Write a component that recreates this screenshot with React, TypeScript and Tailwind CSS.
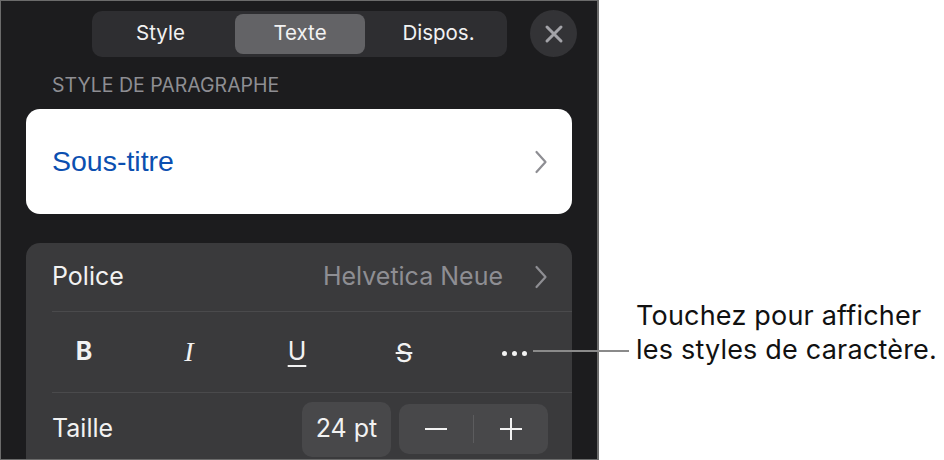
import React from "react";

const Chevron = ({ color }: { color: string }) => (
  <svg width="14" height="26" viewBox="0 0 14 26" fill="none">
    <path d="M2.5 3 L11.5 13 L2.5 23" stroke={color} strokeWidth="2.2" strokeLinecap="round" strokeLinejoin="round" />
  </svg>
);

export default function App() {
  return (
    <div className="relative w-[944px] h-[460px] bg-white overflow-hidden" style={{ fontFamily: "Inter, Roboto, sans-serif" }}>
      <div className="w-[599px] h-[460px] bg-[#1c1c1e] border border-[#6b6b6b] border-r-2 flex flex-col overflow-hidden">
        {/* top bar */}
        <div className="shrink-0 flex items-center pt-[9px] pl-[91px]">
          <div className="w-[415px] h-[46px] rounded-[10px] bg-[#2e2e31] flex items-center px-[3px]">
            <div className="flex-1 text-center pr-[9px] text-[20.5px] text-[#f2f2f2]">Style</div>
            <div className="w-[130px] h-[40px] rounded-[8px] bg-[#636366] flex items-center justify-center text-[20.5px] text-[#f2f2f2]">Texte</div>
            <div className="flex-1 text-center pl-[8px] text-[20.5px] text-[#f2f2f2]">Dispos.</div>
          </div>
          <div className="ml-[23px] w-[47px] h-[47px] rounded-full bg-[#333336] flex items-center justify-center">
            <svg width="20" height="20" viewBox="0 0 20 20">
              <path d="M3 3 L17 17 M17 3 L3 17" stroke="#a3a3a8" strokeWidth="3" strokeLinecap="round" />
            </svg>
          </div>
        </div>
        <div className="shrink-0 pl-[51px] mt-[18px] text-[19.5px] leading-[20px] text-[#8e8e93]">STYLE DE PARAGRAPHE</div>
        <div className="shrink-0 ml-[25px] mt-[14px] w-[546px] h-[105px] rounded-[14px] bg-white flex items-center justify-between pl-[26px] pr-[24px]">
          <span className="text-[28.5px] text-[#0b4fb0]" style={{ fontFamily: "'Liberation Sans', Arial, sans-serif" }}>Sous-titre</span>
          <Chevron color="#8e8e93" />
        </div>
        <div className="shrink-0 ml-[25px] mt-[29px] w-[546px] h-[230px] rounded-t-[14px] bg-[#3a3a3c] pl-[26px]">
          <div className="h-[69px] flex items-center justify-between pr-[24px] border-b border-[#4a4a4c]">
            <span className="text-[25px] text-[#f2f2f2]">Police</span>
            <div className="flex items-center gap-[31px]">
              <span className="text-[25px] text-[#8e8e93]">Helvetica Neue</span>
              <Chevron color="#8e8e93" />
            </div>
          </div>
          <div className="h-[81px] flex items-center border-b border-[#4a4a4c] text-[#f2f2f2]">
            <div className="w-[64px] text-center text-[25px] font-bold">B</div>
            <div className="ml-[41px] w-[64px] text-center text-[28px] italic" style={{ fontFamily: "'Liberation Serif', serif" }}>I</div>
            <div className="ml-[44px] w-[64px] text-center text-[25px] underline underline-offset-[5px] decoration-[2px]">U</div>
            <div className="ml-[43px] w-[64px] text-center text-[26px] line-through">S</div>
            <div className="ml-[46px] w-[64px] flex items-center justify-center gap-[5px] pt-[2px]">
              <span className="w-[5px] h-[5px] rounded-full bg-[#f2f2f2]" />
              <span className="w-[5px] h-[5px] rounded-full bg-[#f2f2f2]" />
              <span className="w-[5px] h-[5px] rounded-full bg-[#f2f2f2]" />
            </div>
          </div>
          <div className="h-[72px] flex items-center">
            <span className="text-[25px] text-[#f2f2f2]">Taille</span>
            <div className="ml-auto mr-[24px] flex items-center gap-[8px]">
              <div className="w-[89px] h-[55px] rounded-[10px] bg-[#48484a] flex items-center justify-center text-[25px] text-[#f2f2f2]">24 pt</div>
              <div className="w-[149px] h-[50px] rounded-[10px] bg-[#48484a] flex items-center">
                <div className="flex-1 flex justify-center">
                  <svg width="24" height="24" viewBox="0 0 24 24"><path d="M1 12 H23" stroke="#f2f2f2" strokeWidth="2" /></svg>
                </div>
                <div className="w-px h-[28px] bg-[#5c5c5e]" />
                <div className="flex-1 flex justify-center">
                  <svg width="24" height="24" viewBox="0 0 24 24"><path d="M1 12 H23 M12 1 V23" stroke="#f2f2f2" strokeWidth="2" /></svg>
                </div>
              </div>
            </div>
          </div>
        </div>
      </div>
      {/* callout */}
      <div className="absolute left-[533px] top-[350px] w-[96px] h-[2px] bg-[#8a8a8a]" />
      <div className="absolute left-[636px] top-[299px] text-[27px] tracking-[0.2px] leading-[34px] text-[#111]">
        <div>Touchez pour afficher</div>
        <div>les styles de caractère.</div>
      </div>
    </div>
  );
}
